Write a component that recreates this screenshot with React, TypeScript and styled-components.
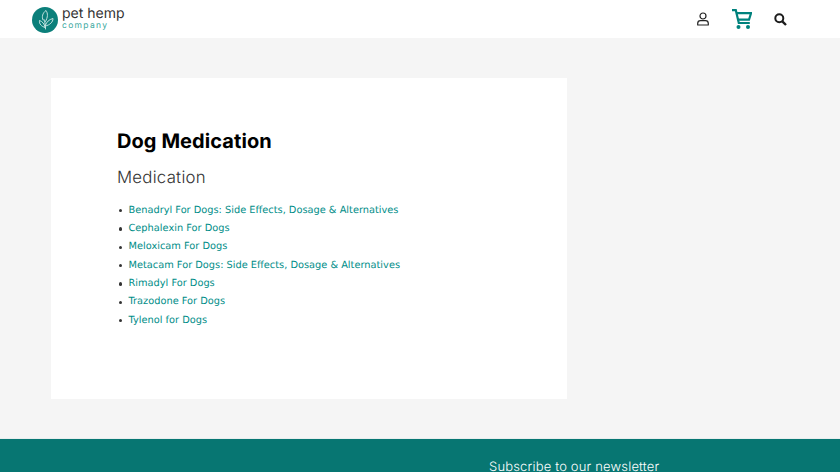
import React from "react";
import styled, { createGlobalStyle } from "styled-components";

const Global = createGlobalStyle`
  html, body { margin: 0; padding: 0; background: #f5f5f5; overflow: hidden; }
  body { font-family: "DejaVu Sans", sans-serif; text-rendering: geometricPrecision; }
`;

const Page = styled.div`
  width: 840px;
  height: 472px;
  display: flex;
  flex-direction: column;
  overflow: hidden;
`;

const Header = styled.header`
  height: 38px;
  flex: none;
  background: #fff;
  display: flex;
  align-items: center;
  justify-content: space-between;
  padding: 0 53px 0 32px;
`;

const Brand = styled.div`
  display: flex;
  align-items: center;
  gap: 4px;
  margin-top: 1px;
`;

const BrandText = styled.div`
  display: flex;
  flex-direction: column;
  font-family: Inter, sans-serif;
`;

const BrandName = styled.span`
  font-size: 14px;
  line-height: 14px;
  color: #333;
  margin-top: -2px;
`;

const BrandSub = styled.span`
  font-size: 8.500px;
  line-height: 10px;
  letter-spacing: 1.300px;
  color: #3aa8a0;
`;

const Icons = styled.nav`
  display: flex;
  align-items: center;
  gap: 22.500px;
`;

const Main = styled.main`
  flex: none;
  height: 400px;
  padding: 40px 0 0 51px;
  box-sizing: border-box;
`;

const Card = styled.article`
  width: 516px;
  height: 321px;
  background: #fff;
  box-sizing: border-box;
  padding: 50px 66px 0;
`;

const Title = styled.h1`
  margin: 0;
  font-family: Inter, sans-serif;
  font-size: 20px;
  line-height: 26px;
  font-weight: 700;
  color: #000;
  letter-spacing: 0.080px;
`;

const Subtitle = styled.h2`
  margin: 12px 0 0;
  font-family: Inter, sans-serif;
  font-size: 16.800px;
  line-height: 24px;
  font-weight: 300;
  color: #333;
  letter-spacing: 0.250px;
`;

const List = styled.ul`
  margin: 11.500px 0 0;
  padding: 0;
  list-style: none;
`;

const Item = styled.li`
  height: 18.330px;
  line-height: 18px;
  display: flex;
  align-items: center;
  gap: 6.500px;
  padding-left: 1.500px;

  &::before {
    content: "";
    width: 3.500px;
    height: 3.500px;
    border-radius: 50%;
    background: #333;
    flex: none;
  }
`;

const Link = styled.a`
  color: #008d88;
  text-decoration: none;
  font-size: 9.800px;
`;

const Footer = styled.footer`
  flex: 1;
  background: #077672;
  border-top: 1px solid #e8eeee;
  padding: 19px 0 0 489px;
`;

const Newsletter = styled.div`
  font-family: Inter, sans-serif;
  font-size: 13px;
  line-height: 18px;
  font-weight: 300;
  color: #fff;
  letter-spacing: 0.170px;
  white-space: nowrap;
`;

const links = [
  "Benadryl For Dogs: Side Effects, Dosage & Alternatives",
  "Cephalexin For Dogs",
  "Meloxicam For Dogs",
  "Metacam For Dogs: Side Effects, Dosage & Alternatives",
  "Rimadyl For Dogs",
  "Trazodone For Dogs",
  "Tylenol for Dogs",
];

const Logo = () => (
  <svg width="26" height="26" viewBox="0 0 26 26">
    <circle cx="13" cy="13" r="13" fill="#0b7f7a" />
    <g fill="none" stroke="#d5ecea" strokeWidth="0.900" strokeLinejoin="round" strokeLinecap="round">
      <path d="M13.500 22c0-3-.2-6-1.500-9.500" />
      <path d="M11 13c-1.500-3-.5-7 3-9.500 2 3 2 6.500-.5 11" />
      <path d="M13.500 18c1-3 3.500-5.500 7.500-6.500 0 3.500-3 6.500-7.500 7.500" />
      <path d="M13 20c-.5-3-2.500-5.500-5.500-6.500-.5 3.500 2 6 5.500 7" />
    </g>
  </svg>
);

const UserIcon = () => (
  <svg width="12" height="14" viewBox="0 0 12 14" fill="none" stroke="#222" strokeWidth="1.200">
    <circle cx="6" cy="4" r="3" />
    <path d="M.7 13v-1.500C.7 9.500 2.300 8.700 3.500 8.700h5c1.200 0 2.800.8 2.800 2.800V13z" strokeLinejoin="round" />
  </svg>
);

const CartIcon = () => (
  <svg width="20" height="20" viewBox="0 0 20 20" fill="none" stroke="#00827d" strokeWidth="2.200">
    <path d="M0 1.200h3.800l3 12.800h11" />
    <path d="M4.500 4.200h14.500l-2 6.500H6" />
    <circle cx="6.500" cy="18" r="2" fill="#00827d" stroke="none" />
    <circle cx="16" cy="18" r="2" fill="#00827d" stroke="none" />
  </svg>
);

const SearchIcon = () => (
  <svg width="13" height="13" viewBox="0 0 13 13" fill="none" stroke="#1c1c1c" strokeWidth="2">
    <circle cx="5.300" cy="5.300" r="4" />
    <path d="M8.300 8.300l3.700 3.700" strokeWidth="2.400" />
  </svg>
);

export default function App() {
  return (
    <Page>
      <Global />
      <Header>
        <Brand>
          <Logo />
          <BrandText>
            <BrandName>pet hemp</BrandName>
            <BrandSub>company</BrandSub>
          </BrandText>
        </Brand>
        <Icons>
          <UserIcon />
          <CartIcon />
          <SearchIcon />
        </Icons>
      </Header>
      <Main>
        <Card>
          <Title>Dog Medication</Title>
          <Subtitle>Medication</Subtitle>
          <List>
            {links.map((l) => (
              <Item key={l}>
                <Link href="#">{l}</Link>
              </Item>
            ))}
          </List>
        </Card>
      </Main>
      <Footer>
        <Newsletter>Subscribe to our newsletter</Newsletter>
      </Footer>
    </Page>
  );
}
